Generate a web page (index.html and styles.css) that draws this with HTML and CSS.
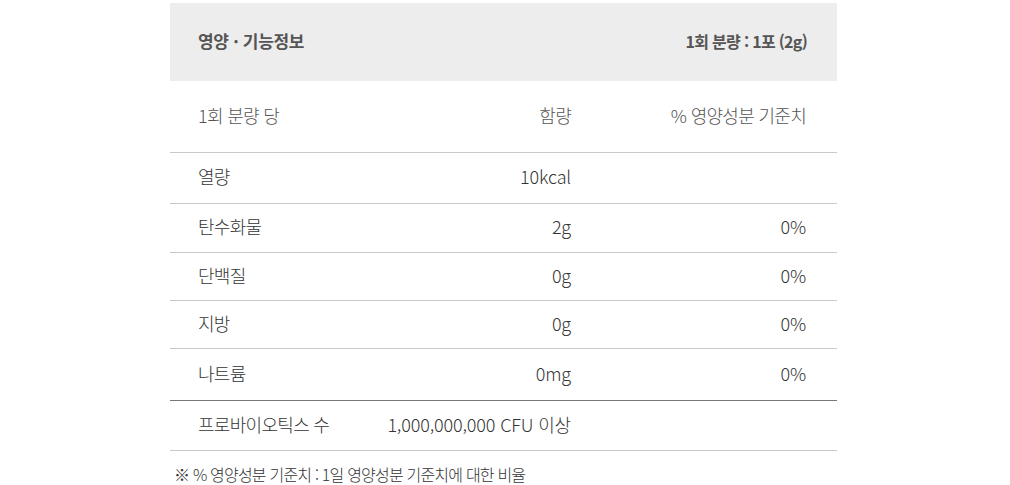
FILE: index.html
```html
<!DOCTYPE html>
<html lang="ko">
<head>
    <meta charset="UTF-8">
    <meta name="viewport" content="width=device-width, initial-scale=1.0">
    <title>영양·기능정보</title>
    <link rel="stylesheet" href="styles.css">
</head>
<body>

    <section class="nutrition">
        <div class="nutrition-head">
            <h2>영양 · 기능정보</h2>
            <span class="serving">1회 분량 : 1포 (2g)</span>
        </div>

        <table class="nutrition-table">
            <colgroup>
                <col class="col-name">
                <col class="col-amount">
                <col class="col-daily">
            </colgroup>
            <thead>
                <tr>
                    <th>1회 분량 당</th>
                    <th class="num">함량</th>
                    <th class="num">% 영양성분 기준치</th>
                </tr>
            </thead>
            <tbody>
                <tr class="kcal">
                    <td>열량</td>
                    <td class="num">10kcal</td>
                    <td class="num"></td>
                </tr>
                <tr class="carb">
                    <td>탄수화물</td>
                    <td class="num">2g</td>
                    <td class="num">0%</td>
                </tr>
                <tr>
                    <td>단백질</td>
                    <td class="num">0g</td>
                    <td class="num">0%</td>
                </tr>
                <tr>
                    <td>지방</td>
                    <td class="num">0g</td>
                    <td class="num">0%</td>
                </tr>
                <tr class="sodium">
                    <td>나트륨</td>
                    <td class="num">0mg</td>
                    <td class="num">0%</td>
                </tr>
                <tr class="probiotic">
                    <td>프로바이오틱스 수</td>
                    <td class="num">1,000,000,000 CFU 이상</td>
                    <td class="num"></td>
                </tr>
            </tbody>
        </table>

        <p class="note">※ % 영양성분 기준치 : 1일 영양성분 기준치에 대한 비율</p>
    </section>

</body>
</html>
```

FILE: styles.css
```css
body {
    font-family: 'Noto Sans CJK KR', 'Noto Sans', sans-serif;
    background-color: #fff;
    color: #333;
    margin: 0;
}

.nutrition {
    width: 667px;
    margin: 3px 0 0 170px;
}

.nutrition-head {
    display: flex;
    justify-content: space-between;
    align-items: center;
    height: 75px;
    padding: 0 30px 3px 28px;
    background-color: #ededed;
    color: #555;
    font-size: 16px;
    font-weight: bold;
}

.nutrition-head h2 {
    margin: 0;
    font-size: 17px;
    letter-spacing: -0.3px;
}

.serving {
    letter-spacing: -0.7px;
}

.nutrition-table {
    width: 100%;
    table-layout: fixed;
    border-collapse: collapse;
    font-size: 18px;
    font-weight: 300;
    letter-spacing: -0.7px;
}

.col-name {
    width: 198px;
}

.col-amount {
    width: 203px;
}

.col-daily {
    width: 266px;
}

.nutrition-table th,
.nutrition-table td {
    padding: 0 0 4px;
    text-align: left;
    font-weight: 300;
    border-bottom: 1px solid #c9c9c9;
    line-height: 20px;
}

.nutrition-table th {
    height: 67px;
    color: #555;
}

.nutrition-table td {
    height: 43px;
}

.nutrition-table tr.kcal td {
    height: 46px;
}

.nutrition-table tr.carb td {
    height: 44px;
}

.nutrition-table tr.sodium td {
    height: 47px;
    border-bottom-color: #777;
}

.nutrition-table tr.probiotic td {
    height: 45px;
}

.nutrition-table th:first-child,
.nutrition-table td:first-child {
    padding-left: 28px;
}

.nutrition-table .num {
    text-align: right;
}

.nutrition-table td.num {
    letter-spacing: -0.15px;
}

.nutrition-table th:last-child,
.nutrition-table td:last-child {
    padding-right: 31px;
}

.note {
    margin: 11px 0 0 4px;
    font-size: 16px;
    font-weight: 300;
    letter-spacing: -0.8px;
    color: #333;
}
```
